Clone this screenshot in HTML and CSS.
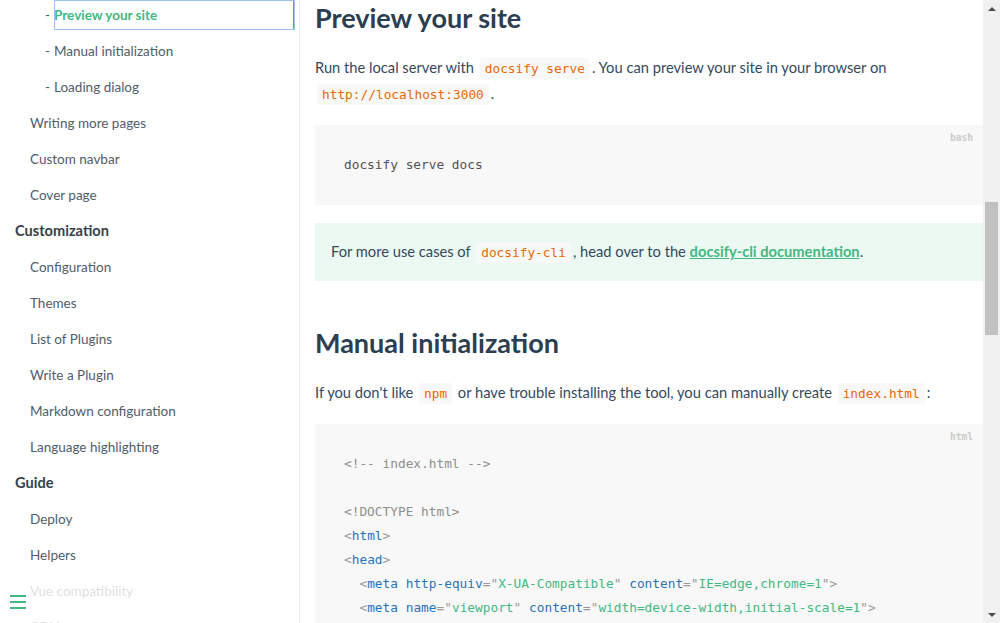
FILE: index.html
```
<!DOCTYPE html>
<html lang="en">
<head>
<meta charset="utf-8">
<title>docsify - Quick start</title>
<link rel="stylesheet" href="styles.css">
</head>
<body>
<div class="app">
  <aside class="sidebar">
    <ul class="nav-list">
      <li class="nav-item l3"><a class="nav-link active">Preview your site</a></li>
      <li class="nav-item l3"><a class="nav-link">Manual initialization</a></li>
      <li class="nav-item l3"><a class="nav-link">Loading dialog</a></li>
      <li class="nav-item l2"><a class="nav-link">Writing more pages</a></li>
      <li class="nav-item l2"><a class="nav-link">Custom navbar</a></li>
      <li class="nav-item l2"><a class="nav-link">Cover page</a></li>
      <li class="nav-item l1">Customization</li>
      <li class="nav-item l2"><a class="nav-link">Configuration</a></li>
      <li class="nav-item l2"><a class="nav-link">Themes</a></li>
      <li class="nav-item l2"><a class="nav-link">List of Plugins</a></li>
      <li class="nav-item l2"><a class="nav-link">Write a Plugin</a></li>
      <li class="nav-item l2"><a class="nav-link">Markdown configuration</a></li>
      <li class="nav-item l2"><a class="nav-link">Language highlighting</a></li>
      <li class="nav-item l1">Guide</li>
      <li class="nav-item l2"><a class="nav-link">Deploy</a></li>
      <li class="nav-item l2"><a class="nav-link">Helpers</a></li>
      <li class="nav-item l2"><a class="nav-link">Vue compatibility</a></li>
      <li class="nav-item l2"><a class="nav-link">CDN</a></li>
    </ul>
    <button class="sidebar-toggle" aria-label="Toggle sidebar"><span></span><span></span><span></span></button>
  </aside>
  <main class="content">
    <section class="markdown">
      <h2>Preview your site</h2>
      <p>Run the local server with <code>docsify serve</code>. You can preview your site in your browser on <code>http://localhost:3000</code>.</p>
      <pre data-lang="bash"><code>docsify serve docs</code></pre>
      <p class="tip">For more use cases of <code>docsify-cli</code>, head over to the <a class="link">docsify-cli documentation</a>.</p>
      <h2>Manual initialization</h2>
      <p>If you don't like <code>npm</code> or have trouble installing the tool, you can manually create <code>index.html</code>:</p>
      <pre data-lang="html"><code><span class="t-com">&lt;!-- index.html --&gt;</span>

<span class="t-com">&lt;!DOCTYPE html&gt;</span>
<span class="t-p">&lt;</span><span class="t-tag">html</span><span class="t-p">&gt;</span>
<span class="t-p">&lt;</span><span class="t-tag">head</span><span class="t-p">&gt;</span>
  <span class="t-p">&lt;</span><span class="t-tag">meta</span> <span class="t-attr">http-equiv</span><span class="t-p">="</span><span class="t-val">X-UA-Compatible</span><span class="t-p">"</span> <span class="t-attr">content</span><span class="t-p">="</span><span class="t-val">IE=edge,chrome=1</span><span class="t-p">"&gt;</span>
  <span class="t-p">&lt;</span><span class="t-tag">meta</span> <span class="t-attr">name</span><span class="t-p">="</span><span class="t-val">viewport</span><span class="t-p">"</span> <span class="t-attr">content</span><span class="t-p">="</span><span class="t-val">width=device-width,initial-scale=1</span><span class="t-p">"&gt;</span></code></pre>
    </section>
  </main>
  <div class="scrollbar">
    <div class="sb-btn"><span class="sb-up"></span></div>
    <div class="sb-track"><div class="sb-thumb"></div></div>
    <div class="sb-btn"><span class="sb-down"></span></div>
  </div>
</div>
</body>
</html>
```
FILE: styles.css
```
* { box-sizing: border-box; }
html, body {
  margin: 0;
  padding: 0;
  width: 1000px;
  height: 623px;
  overflow: hidden;
  background: #fff;
}
body {
  font-family: Lato, "Liberation Sans", sans-serif;
  font-size: 14.7px;
  color: #34495e;
  -webkit-font-smoothing: antialiased;
}
.app {
  display: flex;
  height: 623px;
}

/* Sidebar */
.sidebar {
  position: relative;
  width: 300px;
  flex: 0 0 300px;
  border-right: 1px solid rgba(0, 0, 0, 0.07);
  overflow: hidden;
  color: #364149;
}
.nav-list {
  list-style: none;
  margin: 0;
  padding: 0 4px 0 0;
  display: flex;
  flex-direction: column;
  gap: 6px;
}
.nav-item {
  height: 30px;
  line-height: 30px;
  font-size: 13.5px;
  white-space: nowrap;
  display: flex;
}
.nav-item.l1 {
  padding-left: 15px;
  font-size: 14.6px;
  font-weight: 700;
  color: #364149;
}
.nav-item.l2 { padding-left: 30px; }
.nav-item.l3 { padding-left: 45px; }
.nav-item.l3::before {
  content: "-";
  padding-right: 4px;
  color: #505d6b;
}
.nav-link {
  color: #505d6b;
  text-decoration: none;
  display: block;
  flex: 1;
}
.nav-link.active {
  color: #42b983;
  font-weight: 700;
  border-right: 2px solid #42b983;
  outline: 1px solid #9fbff5;
  outline-offset: -1px;
}
.sidebar-toggle {
  position: absolute;
  left: 0;
  bottom: 0;
  width: 284px;
  height: 38px;
  padding: 10px;
  border: 0;
  margin: 0;
  background: rgba(255, 255, 255, 0.8);
  display: flex;
  flex-direction: column;
  gap: 4px;
  align-items: flex-start;
}
.sidebar-toggle span {
  display: block;
  width: 16px;
  height: 2px;
  background: #42b983;
}

/* Content */
.content {
  flex: 1;
  overflow: hidden;
  padding-left: 15px;
}
.markdown {
  padding-top: 1px;
}
.markdown h2 {
  margin: 0 0 20px;
  font-size: 27px;
  line-height: 34px;
  font-weight: 700;
  color: #2c3e50;
}
.markdown p + h2, .markdown pre + h2 { margin-top: 45px; }
.markdown p {
  margin: 0 0 19px;
  line-height: 25.6px;
}
.markdown code {
  font-family: "DejaVu Sans Mono", "Liberation Mono", monospace;
  font-size: 12.8px;
  line-height: 1;
  color: #e96900;
  background: #f8f8f8;
  border-radius: 2px;
  padding: 3px 5px;
  margin: 0 2px;
}
.markdown pre {
  position: relative;
  margin: 0 0 18px;
  padding: 0 24px;
  background: #f8f8f8;
  line-height: 24px;
  overflow: hidden;
}
.markdown pre::after {
  content: attr(data-lang);
  position: absolute;
  top: 0;
  right: 0;
  padding: 5px 10px 0;
  height: 15px;
  line-height: 15px;
  font-family: "DejaVu Sans Mono", "Liberation Mono", monospace;
  font-size: 9.6px;
  font-weight: 700;
  color: #ccc;
}
.markdown pre code {
  display: block;
  margin: 0;
  padding: 28px 5px;
  background: transparent;
  color: #525252;
  line-height: 24px;
  border-radius: 0;
  white-space: pre;
}
.markdown p.tip {
  background: rgba(66, 185, 131, 0.1);
  padding: 16px;
  margin: 0;
}
.link {
  color: #42b983;
  font-weight: 700;
  text-decoration: underline;
}
.t-com { color: #8e908c; }
.t-p { color: #999; }
.t-tag { color: #2973b7; }
.t-attr { color: #2973b7; }
.t-val { color: #42b983; }

/* Scrollbar */
.scrollbar {
  width: 17px;
  flex: 0 0 17px;
  background: #f1f1f1;
  display: flex;
  flex-direction: column;
}
.sb-btn {
  height: 17px;
  display: flex;
  align-items: center;
  justify-content: center;
}
.sb-up {
  width: 0;
  height: 0;
  border-left: 4px solid transparent;
  border-right: 4px solid transparent;
  border-bottom: 4px solid #505050;
}
.sb-down {
  width: 0;
  height: 0;
  border-left: 4px solid transparent;
  border-right: 4px solid transparent;
  border-top: 4px solid #505050;
}
.sb-track {
  flex: 1;
  padding: 185px 2px 0;
}
.sb-thumb {
  height: 133px;
  background: #c1c1c1;
}
```
